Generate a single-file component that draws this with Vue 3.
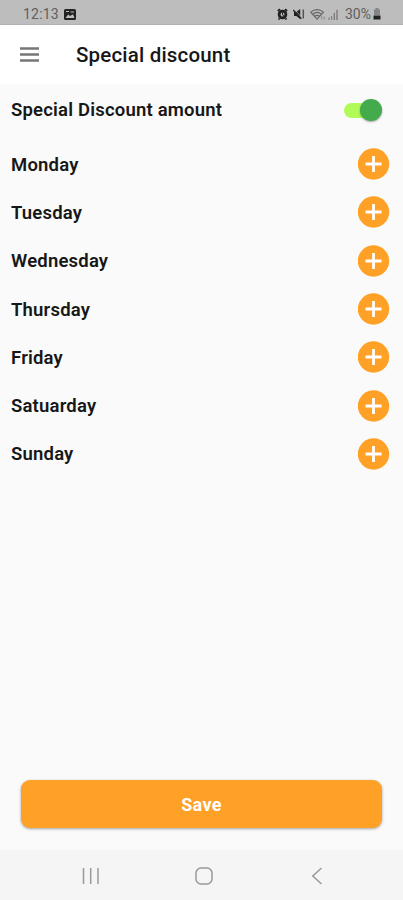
<script setup>
import { ref } from 'vue'

const enabled = ref(true)
const days = ['Monday', 'Tuesday', 'Wednesday', 'Thursday', 'Friday', 'Satuarday', 'Sunday']
</script>

<template>
  <div class="screen">
    <div class="status-bar">
      <span class="clock">12:13</span>
      <svg class="picture" width="12" height="11" viewBox="0 0 12 11">
        <rect width="12" height="11" rx="1.5" fill="#222" />
        <path d="M1.5 9 4.2 5.5l1.8 1.4L9 5.3l1.500 3.700z" fill="#bdbdbd" />
        <path d="M2 2.500h3M6.500 3h3.500" stroke="#bdbdbd" stroke-width="1.200" />
      </svg>
      <div class="status-right">
        <svg width="11" height="12" viewBox="0 0 11 12">
          <circle cx="5.5" cy="6.5" r="3.4" fill="none" stroke="#222" stroke-width="2.8" />
          <path d="M.8 3 3 1.1M10.2 3 8 1.1M2.5 10.5l-1 1M8.5 10.5l1 1" stroke="#222" stroke-width="1.8" />
          <path d="M5.5 4.5v2.3l1.5.8" fill="none" stroke="#222" stroke-width="1" />
        </svg>
        <svg class="mute" width="12" height="12" viewBox="0 0 12 12">
          <path d="M1 4h2.300L7.200 1v10L3.300 8H1z" fill="#222" />
          <path d="M1.200 1 8.500 9.500" stroke="#bdbdbd" stroke-width=".8" />
          <path d="M.2 2 8.300 10.800" stroke="#222" stroke-width="1.300" />
          <path d="M10.300 1.500v9" stroke="#555" stroke-width="1.500" />
        </svg>
        <svg class="wifi" width="16" height="13" viewBox="0 0 16 13">
          <g fill="none" stroke="#666" stroke-width="1.100">
            <path d="M.8 4.200C4.600.8 9.800.8 13.400 4.200L7.100 11.200z" />
            <path d="M2.800 6.200c2.600-2.200 6-2.200 8.600 0M4.700 8.300c1.500-1.200 3.300-1.200 4.800 0" />
          </g>
          <path d="M11.800 8.500v3M14.300 8.500v3" stroke="#888" stroke-width="1" />
        </svg>
        <svg class="signal" width="10" height="11" viewBox="0 0 10 11">
          <path d="M1 8.500V11M3.600 7v4" stroke="#888" stroke-width="1.300" />
          <path d="M6.300 4v7M9 .8V11" stroke="#777" stroke-width="1.300" />
        </svg>
        <span class="battery-text">30%</span>
        <svg class="battery" width="8" height="12" viewBox="0 0 8 12">
          <path d="M2.500 0h3v1.500H7V7H1V1.500h1.500z" fill="#858585" />
          <path d="M.500 7.500h7v4h-7z" fill="#222" />
        </svg>
      </div>
    </div>

    <header class="app-bar">
      <svg class="menu" width="19" height="15" viewBox="0 0 19 15">
        <path d="M0 1.500h19M0 7.500h19M0 13.500h19" stroke="#777" stroke-width="2.400" />
      </svg>
      <h1>Special discount</h1>
    </header>

    <main>
      <div class="discount-row">
        <span>Special Discount amount</span>
        <button class="switch" :class="{ on: enabled }" aria-label="Special Discount amount" @click="enabled = !enabled">
          <span class="thumb"></span>
        </button>
      </div>
      <div class="days">
        <div v-for="day in days" :key="day" class="day-row">
          <span>{{ day }}</span>
          <button class="add" :aria-label="day">
            <svg width="32" height="32" viewBox="0 0 32 32">
              <circle cx="15.500" cy="16" r="15.700" fill="#ffa126" />
              <path d="M15.500 8v16M7.500 16h16" stroke="#fff" stroke-width="2.800" />
            </svg>
          </button>
        </div>
      </div>
    </main>

    <button class="save">Save</button>

    <nav class="nav-bar">
      <svg width="18" height="18" viewBox="0 0 18 18">
        <path d="M1.500 1v16M8.700 1v16M16 1v16" stroke="#999" stroke-width="1.500" />
      </svg>
      <svg width="18" height="18" viewBox="0 0 18 18">
        <rect x="1" y="1" width="16" height="16" rx="5" fill="none" stroke="#999" stroke-width="1.500" />
      </svg>
      <svg width="18" height="18" viewBox="0 0 18 18">
        <path d="M13.500 1 4.800 9l8.700 8" fill="none" stroke="#999" stroke-width="1.500" />
      </svg>
    </nav>
  </div>
</template>

<style>
body {
  margin: 0;
}
</style>

<style scoped>
.screen {
  width: 100%;
  height: 900px;
  display: flex;
  flex-direction: column;
  overflow: hidden;
  background: #fafafa;
  color: #171717;
  font-family: Roboto, "Liberation Sans", sans-serif;
}
button {
  padding: 0;
  border: none;
  font-family: inherit;
  cursor: pointer;
}
svg {
  display: block;
  flex: none;
}
.status-bar {
  height: 25px;
  flex: none;
  box-sizing: border-box;
  padding: 4px 22px 0 23px;
  display: flex;
  align-items: center;
  background: #bdbdbd;
  border-bottom: 1px solid #b2b2b2;
  color: #606060;
  font-size: 14px;
}
.clock {
  width: 37px;
  letter-spacing: 0.2px;
}
.picture {
  margin-left: 4px;
}
.status-right {
  margin-left: auto;
  display: flex;
  align-items: center;
}
.mute {
  margin-left: 5px;
}
.wifi {
  margin-left: 5px;
}
.signal {
  margin-left: 2px;
}
.battery-text {
  margin-left: 7px;
}
.battery {
  margin-left: 2px;
}
.app-bar {
  height: 59px;
  flex: none;
  box-sizing: border-box;
  padding: 0 20px;
  display: flex;
  align-items: center;
  background: #fff;
}
h1 {
  margin: 1px 0 0 37px;
  font-size: 20.5px;
  font-weight: 500;
  line-height: 24px;
  letter-spacing: 0.18px;
}
main {
  flex: 1;
  padding: 0 13px 0 11px;
  font-size: 18.5px;
  font-weight: 600;
  letter-spacing: 0.19px;
}
.discount-row {
  height: 52px;
  padding-right: 8px;
  display: flex;
  align-items: center;
  justify-content: space-between;
}
.switch {
  width: 38px;
  height: 15px;
  display: flex;
  align-items: center;
  border-radius: 8px;
  background: #bbb;
}
.switch.on {
  justify-content: flex-end;
  background: #b0fb58;
}
.thumb {
  width: 22px;
  height: 22px;
  border-radius: 50%;
  background: #fff;
  box-shadow: 0 1px 2px rgba(0, 0, 0, 0.35);
  flex: none;
}
.switch.on .thumb {
  background: #43ab4b;
}
.days {
  padding-top: 4px;
}
.day-row {
  height: 48.3px;
  display: flex;
  align-items: center;
  justify-content: space-between;
}
.day-row span {
  padding-top: 1px;
}
.add {
  background: none;
}
.save {
  height: 48px;
  flex: none;
  margin: 0 21px 22px;
  border-radius: 9px;
  background: #ffa126;
  box-shadow: 0 1px 3px rgba(0, 0, 0, 0.35);
  color: #fff;
  font-size: 18px;
  font-weight: 700;
  letter-spacing: 0.3px;
}
.nav-bar {
  height: 50px;
  flex: none;
  box-sizing: border-box;
  padding: 2px 0 0 4px;
  display: grid;
  grid-template-columns: repeat(3, 113px);
  justify-content: center;
  align-items: center;
  justify-items: center;
  background: #f5f5f5;
}
</style>
